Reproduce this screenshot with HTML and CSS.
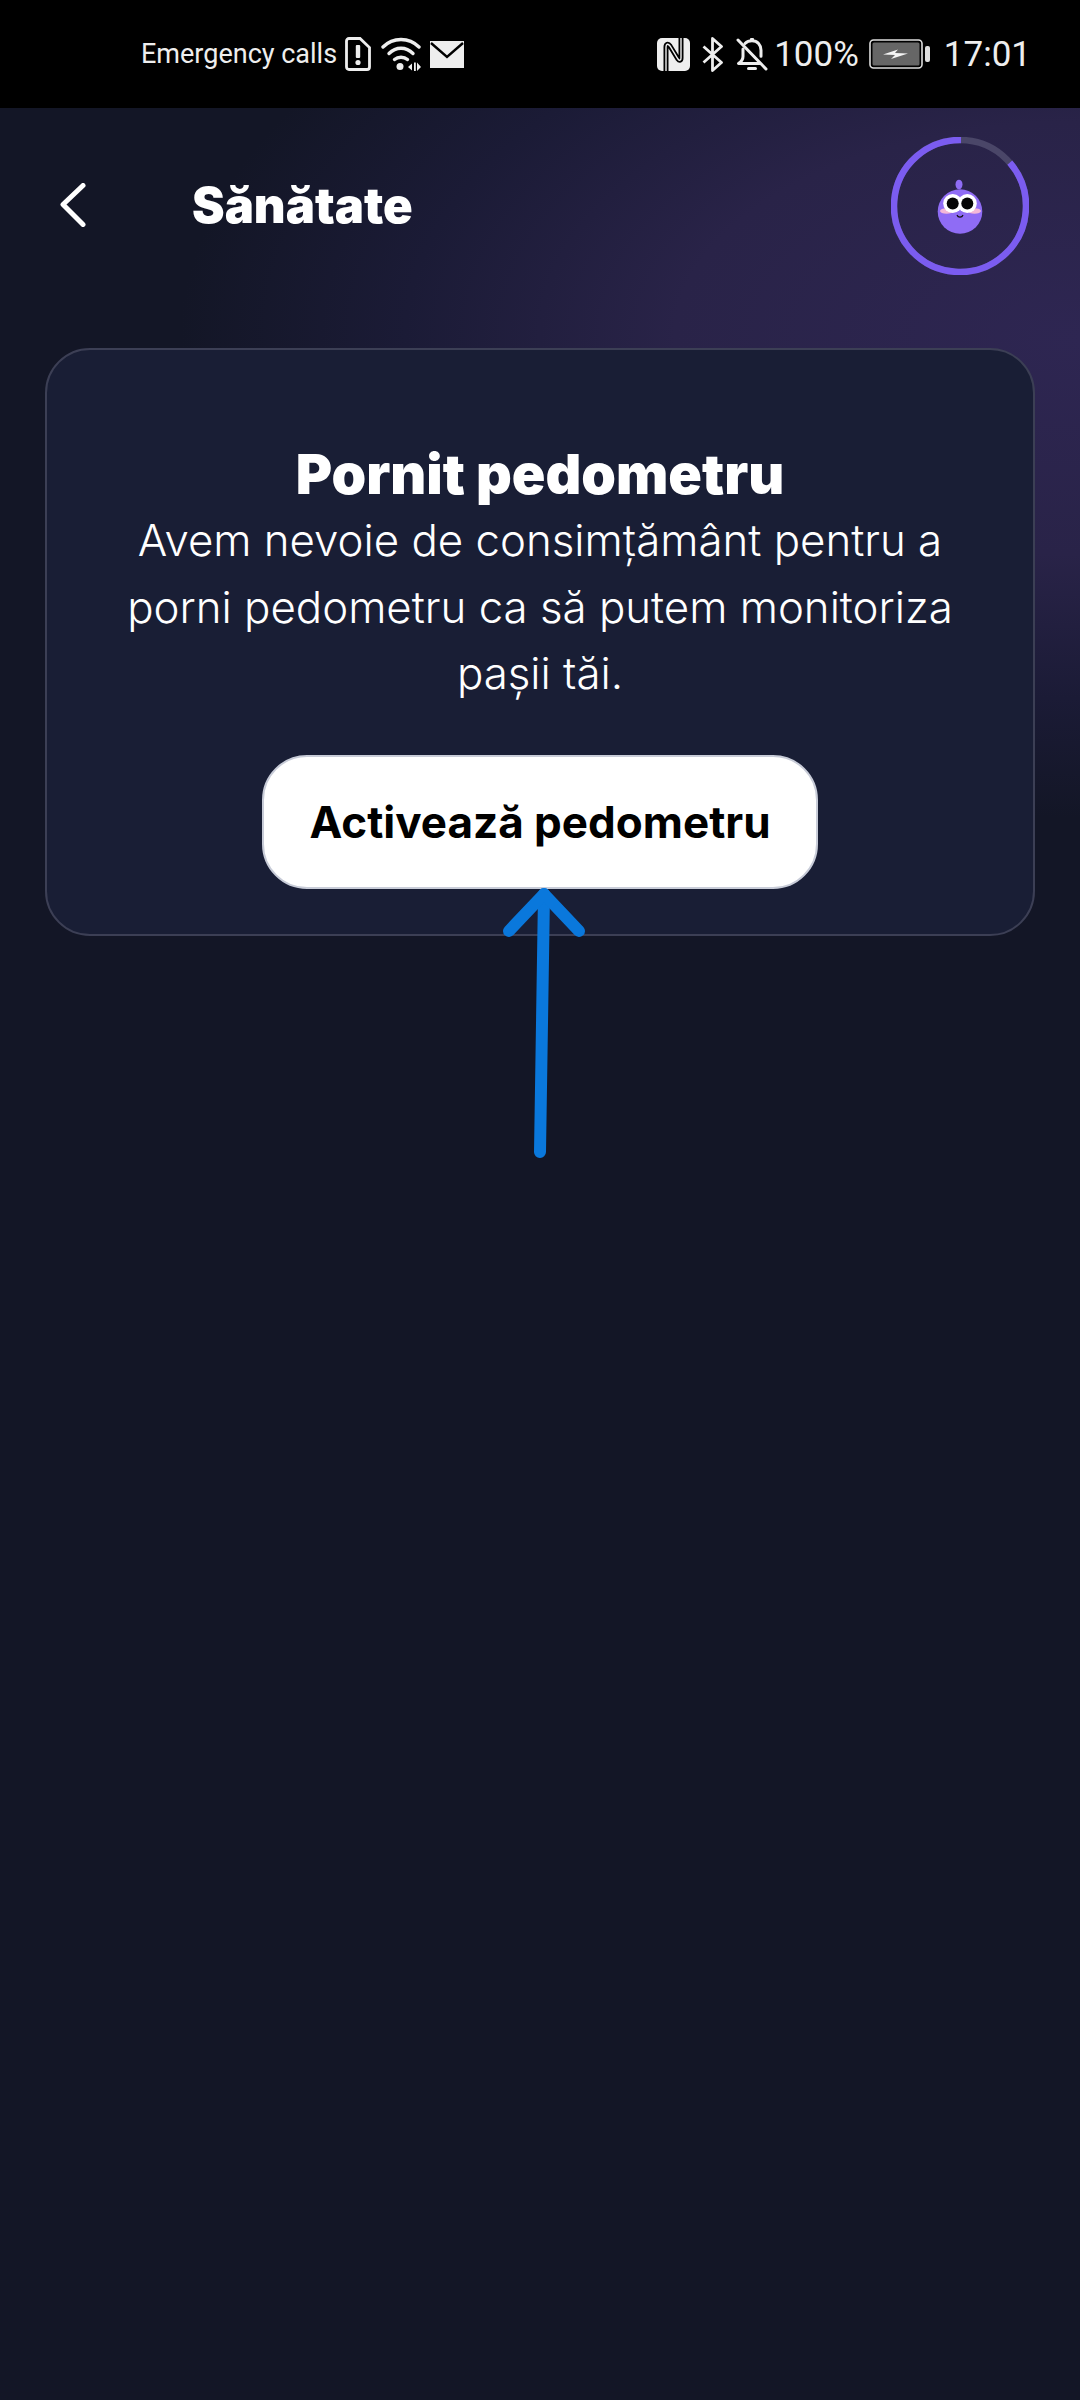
FILE: index.html
```html
<!DOCTYPE html>
<html lang="ro">
<head>
  <meta charset="UTF-8">
  <meta name="viewport" content="width=device-width, initial-scale=1.0">
  <title>Sănătate</title>
  <link rel="stylesheet" href="styles.css">
</head>
<body>

  <div class="status-bar">
    <div class="status-left">
      <span class="carrier">Emergency calls</span>
      <!-- sim alert -->
      <svg class="ico-sim" viewBox="0 0 26 34">
        <path d="M4 1.500h11l9.500 9v19.500a2.500 2.500 0 0 1-2.500 2.500H4a2.500 2.500 0 0 1-2.500-2.500V4a2.500 2.500 0 0 1 2.500-2.500z" fill="none" stroke="#eee" stroke-width="2.800"/>
        <rect x="10.800" y="8" width="4.400" height="13" rx="1" fill="#eee"/>
        <circle cx="13" cy="25.500" r="2.600" fill="#eee"/>
      </svg>
      <!-- wifi -->
      <svg class="ico-wifi" viewBox="0 0 40 34">
        <g fill="none" stroke="#eee" stroke-width="3.400" stroke-linecap="round">
          <path d="M2 10C12 0 28 0 38 10"/>
          <path d="M8 16.500C15 9.500 25 9.500 32 16.500"/>
          <path d="M13.500 22.500C17 19.500 23 19.500 26.500 22.500"/>
        </g>
        <circle cx="19" cy="29.500" r="3.500" fill="#eee"/>
        <path d="M27 30l4-3.500v7zM33 25.500h1.800v8.500H33zM36 25.500l4 4.500-4 4z" fill="#eee"/>
      </svg>
      <!-- mail -->
      <svg class="ico-mail" viewBox="0 0 34 27">
        <path d="M0 0h34v27H0z" fill="#eee"/>
        <path d="M1 2l16 14L33 2" fill="none" stroke="#000" stroke-width="2.400"/>
      </svg>
    </div>
    <div class="status-right">
      <!-- nfc -->
      <svg class="ico-nfc" viewBox="0 0 33 33">
        <rect width="33" height="33" rx="5" fill="#eee"/>
        <path d="M9 33V9c0-3 2-4 4-1l8 13c1.500 2 3 1.500 3-1V0" fill="none" stroke="#000" stroke-width="5"/>
        <path d="M9 33V9c0-3 2-4 4-1l8 13c1.500 2 3 1.500 3-1V0" fill="none" stroke="#eee" stroke-width="1.400"/>
      </svg>
      <!-- bluetooth -->
      <svg class="ico-bt" viewBox="0 0 22 35">
        <path d="M1.500 9.500L19.500 25.500 10.500 33.500V1.500L19.500 9.500 1.500 25.500" fill="none" stroke="#eee" stroke-width="2.800" stroke-linejoin="round"/>
      </svg>
      <!-- muted bell -->
      <svg class="ico-bell" viewBox="0 0 32 35">
        <g fill="none" stroke="#eee" stroke-width="3" stroke-linecap="round" stroke-linejoin="round">
          <path d="M9 6.500C11 4.500 13 3.800 16 3.800c5.500 0 9 4 9 9.500v6"/>
          <path d="M7 12v7.500c0 3-1.500 5-4.500 7h21"/>
          <path d="M2 3l28 29"/>
          <path d="M12.500 31.500h7"/>
        </g>
        <rect x="14" y="1" width="4" height="3" rx="1" fill="#eee"/>
      </svg>
      <span class="battery-pct">100%</span>
      <!-- charging battery -->
      <svg class="ico-battery" viewBox="0 0 62 30">
        <rect x="1" y="1" width="52" height="28" rx="3.500" fill="none" stroke="#ddd" stroke-width="1.600"/>
        <rect x="3.500" y="3.500" width="47" height="23" rx="1.500" fill="#666"/>
        <path d="M14 15.500l15-5-3 3.500 13 .5-17 5.500 4-4z" fill="#f4f4f4"/>
        <rect x="56" y="7" width="5" height="16" rx="2" fill="#ddd"/>
      </svg>
      <span class="clock">17:01</span>
    </div>
  </div>

  <div class="screen">
    <header class="top-bar">
      <button class="back-btn" type="button" aria-label="Înapoi">
        <svg viewBox="0 0 26 44" width="26" height="44">
          <path d="M23 2.500L3 21.500l20 20" fill="none" stroke="#fff" stroke-width="5" stroke-linecap="round" stroke-linejoin="round"/>
        </svg>
      </button>
      <h1 class="page-title">Sănătate</h1>
      <div class="avatar">
        <svg viewBox="0 0 138 138" width="138" height="138">
          <circle cx="69" cy="69" r="66" fill="none" stroke="#4a4668" stroke-width="6.500"/>
          <!-- goal progress: 86.5% of the ring, starting past the grey gap -->
          <circle cx="69" cy="69" r="66" fill="none" stroke="#7b5cf0" stroke-width="6.500" stroke-dasharray="358.700 414.700" transform="rotate(-41 69 69)"/>
          <!-- bird -->
          <ellipse cx="68" cy="47.500" rx="3.500" ry="4.800" fill="#8f6cf5"/>
          <circle cx="69" cy="74.500" r="22.300" fill="#8f6cf5"/>
          <ellipse cx="55.500" cy="74" rx="6.500" ry="2.800" fill="#f4b8d8"/>
          <ellipse cx="83.500" cy="74" rx="6.500" ry="2.800" fill="#f4b8d8"/>
          <circle cx="61.700" cy="66.500" r="9.500" fill="#fff"/>
          <circle cx="76.300" cy="66.500" r="9.500" fill="#fff"/>
          <circle cx="61.700" cy="66.500" r="6" fill="#050505"/>
          <circle cx="76.300" cy="66.500" r="6" fill="#050505"/>
          <path d="M66 78c1 2.800 5 2.800 6 0" fill="none" stroke="#111" stroke-width="1.200"/>
        </svg>
      </div>
    </header>

    <section class="card">
      <h2 class="card-title">Pornit pedometru</h2>
      <p class="card-text">Avem nevoie de consimțământ pentru a porni pedometru ca să putem monitoriza pașii tăi.</p>
      <button class="enable-btn" type="button">Activează pedometru</button>
    </section>
  </div>

  <!-- hint arrow drawn over the card -->
  <svg class="hint-arrow" viewBox="0 0 90 272" width="90" height="272">
    <path d="M42 266L46 8" fill="none" stroke="#0a78dc" stroke-width="12" stroke-linecap="round"/>
    <path d="M11 45L46 8l35 37" fill="none" stroke="#0a78dc" stroke-width="12" stroke-linecap="round" stroke-linejoin="round"/>
  </svg>

</body>
</html>
```

FILE: styles.css
```css
* {
  margin: 0;
  padding: 0;
  box-sizing: border-box;
}

body {
  width: 1080px;
  height: 2400px;
  background: #131626;
  font-family: 'Inter', 'Liberation Sans', sans-serif;
  color: white;
  position: relative;
  overflow: hidden;
}

.status-bar {
  height: 108px;
  background: #000;
  color: #eee;
  font-family: 'Roboto', sans-serif;
  display: flex;
  justify-content: space-between;
  align-items: center;
  padding: 0 49px 0 141px;
}

.status-left,
.status-right {
  display: flex;
  align-items: center;
}

.carrier {
  font-size: 27px;
  margin-right: 8px;
}

.ico-sim { width: 26px; height: 34px; margin-right: 10px; }
.ico-wifi { width: 40px; height: 34px; margin-right: 9px; }
.ico-mail { width: 34px; height: 27px; }
.ico-nfc { width: 33px; height: 33px; margin-right: 12px; }
.ico-bt { width: 22px; height: 35px; margin-right: 12px; }
.ico-bell { width: 32px; height: 35px; margin-right: 6px; }
.ico-battery { width: 62px; height: 30px; margin: 0 13px 0 10px; }

.battery-pct,
.clock {
  font-size: 35px;
}

.screen {
  height: 2292px;
  padding: 29px 45px 0;
  background: radial-gradient(ellipse 900px 480px at 1080px 230px, #2e2652 0%, #292348 45%, #1b1b36 75%, transparent 100%);
}

.top-bar {
  display: flex;
  align-items: center;
  height: 138px;
}

.back-btn {
  background: none;
  border: none;
  width: 147px;
  padding-left: 15px;
  padding-bottom: 2px;
  display: flex;
}

.page-title {
  font-size: 49px;
  font-weight: 900;
  flex: 1;
  padding-bottom: 2px;
}

.avatar {
  width: 138px;
  height: 138px;
  margin-right: 6px;
}

.card {
  margin-top: 73px;
  height: 588px;
  padding: 92px 66px 0;
  background: #191e35;
  border: 2px solid #3c3f55;
  border-radius: 45px;
  display: flex;
  flex-direction: column;
  align-items: center;
  text-align: center;
}

.card-title {
  font-size: 55.500px;
  font-weight: 900;
  line-height: 64px;
}

.card-text {
  font-size: 43.800px;
  font-weight: 300;
  line-height: 66.500px;
  margin-top: 2px;
}

.enable-btn {
  margin-top: 47px;
  width: 556px;
  height: 134px;
  flex-shrink: 0;
  background: #fff;
  border: 2px solid #c8ccd8;
  border-radius: 45px;
  color: #000;
  font-family: inherit;
  font-size: 44px;
  font-weight: 700;
}

.hint-arrow {
  position: absolute;
  left: 498px;
  top: 886px;
}
```
